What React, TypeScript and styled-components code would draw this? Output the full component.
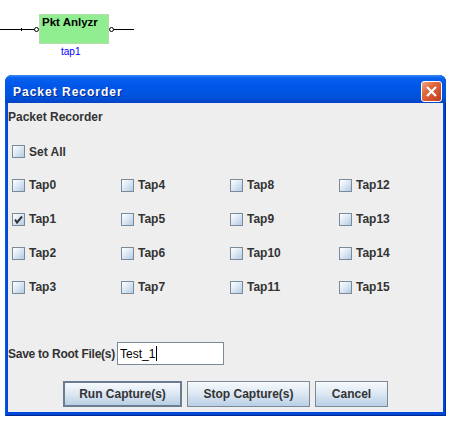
import React from "react";
import styled, { createGlobalStyle } from "styled-components";

const GlobalStyle = createGlobalStyle`
  html, body {
    margin: 0;
    padding: 0;
    background: #ffffff;
    font-family: "Liberation Sans", Arial, sans-serif;
  }
`;

const Page = styled.div`
  width: 454px;
  height: 430px;
  overflow: hidden;
  background: #ffffff;
`;

const Diagram = styled.div`
  height: 75px;
  display: flex;
  align-items: flex-start;
  padding-top: 14px;
  box-sizing: border-box;
`;

const Wire = styled.svg`
  display: block;
  margin-top: 11px;
  flex: none;
`;

const NodeCol = styled.div`
  display: flex;
  flex-direction: column;
`;

const NodeBox = styled.div`
  width: 70px;
  height: 30px;
  box-sizing: border-box;
  background: #90ee90;
  border: 1px solid #b4dcae;
  padding: 1px 0 0 2px;
  font-size: 11.5px;
  font-weight: bold;
  line-height: 13px;
  color: #000000;
`;

const NodeTag = styled.div`
  padding-left: 22px;
  margin-top: 2px;
  font-size: 10px;
  line-height: 12px;
  color: #0000ff;
`;

const Window = styled.div`
  margin-left: 5px;
  width: 441px;
  display: flex;
  flex-direction: column;
  border-radius: 7px 7px 0 0;
  background: #0048d8;
  padding: 0 3px 4px 3px;
  box-sizing: border-box;
  box-shadow: inset -1px 0 0 #002c9a, inset 1px 0 0 #0a58e8, inset 0 -1px 0 #002a90;
`;

const TitleBar = styled.div`
  height: 28px;
  margin: 0 -3px;
  padding: 0 4px 0 8px;
  display: flex;
  align-items: center;
  justify-content: space-between;
  border-radius: 7px 7px 0 0;
  background: linear-gradient(
    to bottom,
    #3b8cf8 0%,
    #0a62f0 10%,
    #0057e8 35%,
    #0055e2 65%,
    #004fd8 85%,
    #0042c4 100%
  );
`;

const TitleText = styled.span`
  color: #ffffff;
  font-size: 12px;
  font-weight: bold;
  letter-spacing: 1px;
  text-shadow: 1px 1px 0 #0a2a88;
  padding-top: 5px;
`;

const CloseButton = styled.div`
  width: 21px;
  height: 21px;
  box-sizing: border-box;
  border: 1px solid #ffffff;
  border-radius: 3px;
  margin-top: 4px;
  display: flex;
  align-items: center;
  justify-content: center;
  background: linear-gradient(135deg, #f0a888 0%, #e06a40 35%, #d2502a 70%, #b83c1c 100%);
`;

const Content = styled.div`
  background: #eeeeee;
  display: flex;
  flex-direction: column;
  padding-bottom: 5px;
`;

const Heading = styled.div`
  padding: 7px 0 10px 0;
  font-size: 12px;
  font-weight: bold;
  line-height: 15px;
  color: #333333;
`;

const Grid = styled.div`
  display: grid;
  grid-template-columns: repeat(4, 109px);
  grid-template-rows: repeat(4, 34px);
  grid-auto-flow: column;
  padding-left: 4px;
`;

const Option = styled.label<{ $height?: number }>`
  height: ${(p) => p.$height ?? 34}px;
  display: flex;
  align-items: center;
  gap: 4px;
  font-size: 12px;
  font-weight: bold;
  color: #333333;
`;

const SetAllRow = styled.div`
  padding-left: 4px;
`;

const Box = styled.span`
  width: 13px;
  height: 13px;
  box-sizing: border-box;
  border: 1px solid #7a8a99;
  background: linear-gradient(135deg, #ffffff 0%, #e2ecf6 40%, #b4cbe3 100%);
  display: flex;
  align-items: center;
  justify-content: center;
  flex: none;
`;

const SaveRow = styled.div`
  margin-top: 38px;
  display: flex;
  align-items: center;
  gap: 2px;
`;

const SaveLabel = styled.span`
  font-size: 12px;
  font-weight: bold;
  letter-spacing: -0.25px;
  color: #333333;
`;

const Field = styled.div`
  width: 107px;
  height: 23px;
  box-sizing: border-box;
  border: 1px solid #7a8a99;
  background: #ffffff;
  display: flex;
  align-items: center;
  padding-left: 2px;
  font-size: 12px;
  color: #000000;
`;

const Caret = styled.span`
  width: 1px;
  height: 15px;
  background: #000000;
  margin-left: 1px;
`;

const ButtonRow = styled.div`
  margin-top: 16px;
  display: flex;
  justify-content: center;
  gap: 5px;
`;

const Button = styled.div<{ $width: number; $default?: boolean }>`
  width: ${(p) => p.$width}px;
  height: 26px;
  box-sizing: border-box;
  border: ${(p) => (p.$default ? "2px solid #6a7d90" : "1px solid #7a8a99")};
  background: linear-gradient(to bottom, #f6f9fc 0%, #dfe9f4 45%, #b9cfe5 100%);
  display: flex;
  align-items: center;
  justify-content: center;
  font-size: 12px;
  font-weight: bold;
  color: #333333;
`;

const Check = () => (
  <svg width="11" height="11" viewBox="0 0 11 11">
    <path d="M2 5.5 L4 8.5 L9 2.5" fill="none" stroke="#333333" strokeWidth="2" />
  </svg>
);

const CheckBox: React.FC<{ label: string; checked?: boolean; height?: number }> = ({
  label,
  checked,
  height,
}) => (
  <Option $height={height}>
    <Box>{checked && <Check />}</Box>
    {label}
  </Option>
);

const App: React.FC = () => {
  const taps = Array.from({ length: 16 }, (_, i) => `Tap${i}`);

  return (
    <Page>
      <GlobalStyle />
      <Diagram>
        <Wire width="39" height="9" viewBox="0 0 39 9">
          <line x1="0" y1="4.5" x2="35" y2="4.5" stroke="#000" strokeWidth="1" />
          <line x1="21.5" y1="3" x2="21.5" y2="6" stroke="#000" strokeWidth="1" />
          <circle cx="36.5" cy="4.5" r="2" fill="#fff" stroke="#000" strokeWidth="1" />
        </Wire>
        <NodeCol>
          <NodeBox>Pkt Anlyzr</NodeBox>
          <NodeTag>tap1</NodeTag>
        </NodeCol>
        <Wire width="25" height="9" viewBox="0 0 25 9">
          <circle cx="2.5" cy="4.5" r="2" fill="#fff" stroke="#000" strokeWidth="1" />
          <line x1="4.5" y1="4.5" x2="25" y2="4.5" stroke="#000" strokeWidth="1" />
        </Wire>
      </Diagram>

      <Window>
        <TitleBar>
          <TitleText>Packet Recorder</TitleText>
          <CloseButton>
            <svg width="13" height="13" viewBox="0 0 13 13">
              <path d="M2 2 L11 11 M11 2 L2 11" stroke="#ffffff" strokeWidth="2.2" />
            </svg>
          </CloseButton>
        </TitleBar>
        <Content>
          <Heading>Packet Recorder</Heading>
          <SetAllRow>
            <CheckBox label="Set All" height={33} />
          </SetAllRow>
          <Grid>
            {taps.map((t) => (
              <CheckBox key={t} label={t} checked={t === "Tap1"} />
            ))}
          </Grid>
          <SaveRow>
            <SaveLabel>Save to Root File(s)</SaveLabel>
            <Field>
              Test_1
              <Caret />
            </Field>
          </SaveRow>
          <ButtonRow>
            <Button $width={119} $default>
              Run Capture(s)
            </Button>
            <Button $width={123}>Stop Capture(s)</Button>
            <Button $width={73}>Cancel</Button>
          </ButtonRow>
        </Content>
      </Window>
    </Page>
  );
};

export default App;
